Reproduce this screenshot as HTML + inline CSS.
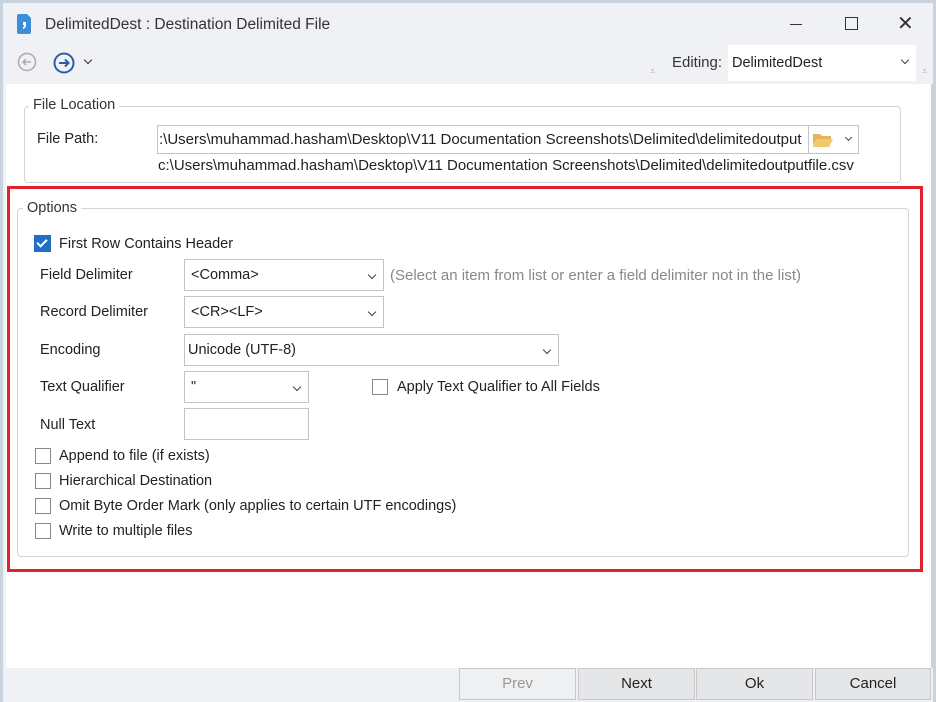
<!DOCTYPE html>
<html><head><style>
*{box-sizing:border-box;margin:0;padding:0}
body{width:936px;height:702px;background:#c9d3de;font-family:"Liberation Sans",sans-serif;font-size:14.5px;color:#222;position:relative;overflow:hidden}
.a{position:absolute}
.win{left:3px;top:3px;width:930px;height:699px;background:#eff1f4}
.content{left:6px;top:84px;width:926px;height:584px;background:#fff}
.box{border:1px solid #d4d4d4;border-radius:4px}
.lg{background:#fff;padding:0 4px;color:#333}
.inp{border:1px solid #c4c4c4;background:#fff;height:32px;line-height:30px;padding-left:6px;white-space:nowrap;overflow:hidden}
.dd::after{content:"";position:absolute;right:8px;top:12px;width:5px;height:5px;border-right:1.5px solid #444;border-bottom:1.5px solid #444;transform:rotate(45deg)}
.cb{width:16px;height:16px;border:1px solid #888;background:#fff}
.btn{top:668px;height:32px;background:#e5e6e8;border:1px solid #c8c8c8;text-align:center;line-height:30px;font-size:15px}
</style></head><body>
<div class="a win"></div>
<svg class="a" style="left:16px;top:14px" width="16" height="20"><path d="M1 2 Q1 0 3 0 H11 L15 4 V18 Q15 20 13 20 H3 Q1 20 1 18Z" fill="#3b8ed8"/><path d="M7 8 h3 v3 q0 3 -3 4 v-2 q1 0 1 -2 h-1z" fill="#fff"/></svg>
<div class="a" style="left:45px;top:16px;font-size:15.5px;color:#333">DelimitedDest : Destination Delimited File</div>
<div class="a" style="left:790px;top:24px;width:12px;height:1px;background:#333"></div>
<div class="a" style="left:845px;top:17px;width:13px;height:13px;border:1.5px solid #333"></div>
<div class="a" style="left:897px;top:16px;font-size:20px;line-height:16px;color:#333">✕</div>
<svg class="a" style="left:17px;top:52px" width="20" height="20"><circle cx="10" cy="10" r="8.5" fill="none" stroke="#aaa" stroke-width="1.5"/><path d="M14 10H6M9 7L6 10L9 13" fill="none" stroke="#aaa" stroke-width="1.5"/></svg>
<svg class="a" style="left:53px;top:52px" width="22" height="22"><circle cx="11" cy="11" r="9.5" fill="none" stroke="#2a5ea8" stroke-width="2"/><path d="M6 11H15M12 7.5L15.5 11L12 14.5" fill="none" stroke="#2a5ea8" stroke-width="2"/></svg>
<div class="a" style="left:85px;top:57px;width:6px;height:6px;border-right:1.5px solid #333;border-bottom:1.5px solid #333;transform:rotate(45deg)"></div>
<div class="a" style="left:650px;top:66px;font-size:9px;color:#aaa">⩡</div>
<div class="a" style="left:672px;top:54px;font-size:15px;color:#333">Editing:</div>
<div class="a dd" style="left:728px;top:45px;width:188px;height:36px;background:#fff;padding:10px 4px;font-size:14.5px">DelimitedDest</div>
<div class="a" style="left:922px;top:66px;font-size:9px;color:#aaa">⩡</div>
<div class="a content"></div>
<div class="a" style="left:931px;top:84px;width:2px;height:584px;background:#d0d0d0"></div>
<div class="a box" style="left:24px;top:106px;width:877px;height:77px"></div>
<div class="a lg" style="left:29px;top:97px">File Location</div>
<div class="a" style="left:37px;top:131px">File Path:</div>
<div class="a inp" style="left:157px;top:125px;width:652px;height:29px;line-height:27px;padding-left:1px;font-size:15px">:\Users\muhammad.hasham\Desktop\V11 Documentation Screenshots\Delimited\delimitedoutput</div>
<div class="a" style="left:808px;top:125px;width:51px;height:29px;border:1px solid #c4c4c4;background:#fff"></div>
<svg class="a" style="left:812px;top:132px" width="22" height="16"><path d="M1 2h7l2 2h9v3H5L1 14z" fill="#e2b65a"/><path d="M5 7h16l-4 8H1z" fill="#f0c870"/></svg>
<div class="a" style="left:846px;top:135px;width:5px;height:5px;border-right:1.5px solid #444;border-bottom:1.5px solid #444;transform:rotate(45deg)"></div>
<div class="a" style="left:158px;top:157px;font-size:15px">c:\Users\muhammad.hasham\Desktop\V11 Documentation Screenshots\Delimited\delimitedoutputfile.csv</div>
<div class="a" style="left:7px;top:186px;width:916px;height:386px;border:3px solid #e3202c"></div>
<div class="a box" style="left:17px;top:208px;width:892px;height:349px"></div>
<div class="a lg" style="left:23px;top:200px">Options</div>
<div class="a" style="left:34px;top:235px;width:17px;height:17px;background:#1f6fc6"></div>
<div class="a" style="left:39px;top:237px;width:6px;height:10px;border-right:2px solid #fff;border-bottom:2px solid #fff;transform:rotate(45deg)"></div>
<div class="a" style="left:59px;top:236px">First Row Contains Header</div>
<div class="a" style="left:40px;top:267px">Field Delimiter</div>
<div class="a inp dd" style="left:184px;top:259px;width:200px">&lt;Comma&gt;</div>
<div class="a" style="left:390px;top:267px;color:#888;font-size:15px">(Select an item from list or enter a field delimiter not in the list)</div>
<div class="a" style="left:40px;top:304px">Record Delimiter</div>
<div class="a inp dd" style="left:184px;top:296px;width:200px">&lt;CR&gt;&lt;LF&gt;</div>
<div class="a" style="left:40px;top:342px">Encoding</div>
<div class="a inp dd" style="left:184px;top:334px;width:375px;padding-left:3px">Unicode (UTF-8)</div>
<div class="a" style="left:40px;top:379px">Text Qualifier</div>
<div class="a inp dd" style="left:184px;top:371px;width:125px">"</div>
<div class="a cb" style="left:372px;top:379px"></div>
<div class="a" style="left:397px;top:379px">Apply Text Qualifier to All Fields</div>
<div class="a" style="left:40px;top:417px">Null Text</div>
<div class="a inp" style="left:184px;top:408px;width:125px"></div>
<div class="a cb" style="left:35px;top:448px"></div><div class="a" style="left:59px;top:448px">Append to file (if exists)</div>
<div class="a cb" style="left:35px;top:473px"></div><div class="a" style="left:59px;top:473px">Hierarchical Destination</div>
<div class="a cb" style="left:35px;top:498px"></div><div class="a" style="left:59px;top:498px">Omit Byte Order Mark (only applies to certain UTF encodings)</div>
<div class="a cb" style="left:35px;top:523px"></div><div class="a" style="left:59px;top:523px">Write to multiple files</div>
<div class="a btn" style="left:459px;width:117px;background:#eff0f1;color:#999">Prev</div>
<div class="a btn" style="left:578px;width:117px">Next</div>
<div class="a btn" style="left:696px;width:117px">Ok</div>
<div class="a btn" style="left:815px;width:116px">Cancel</div>
</body></html>
